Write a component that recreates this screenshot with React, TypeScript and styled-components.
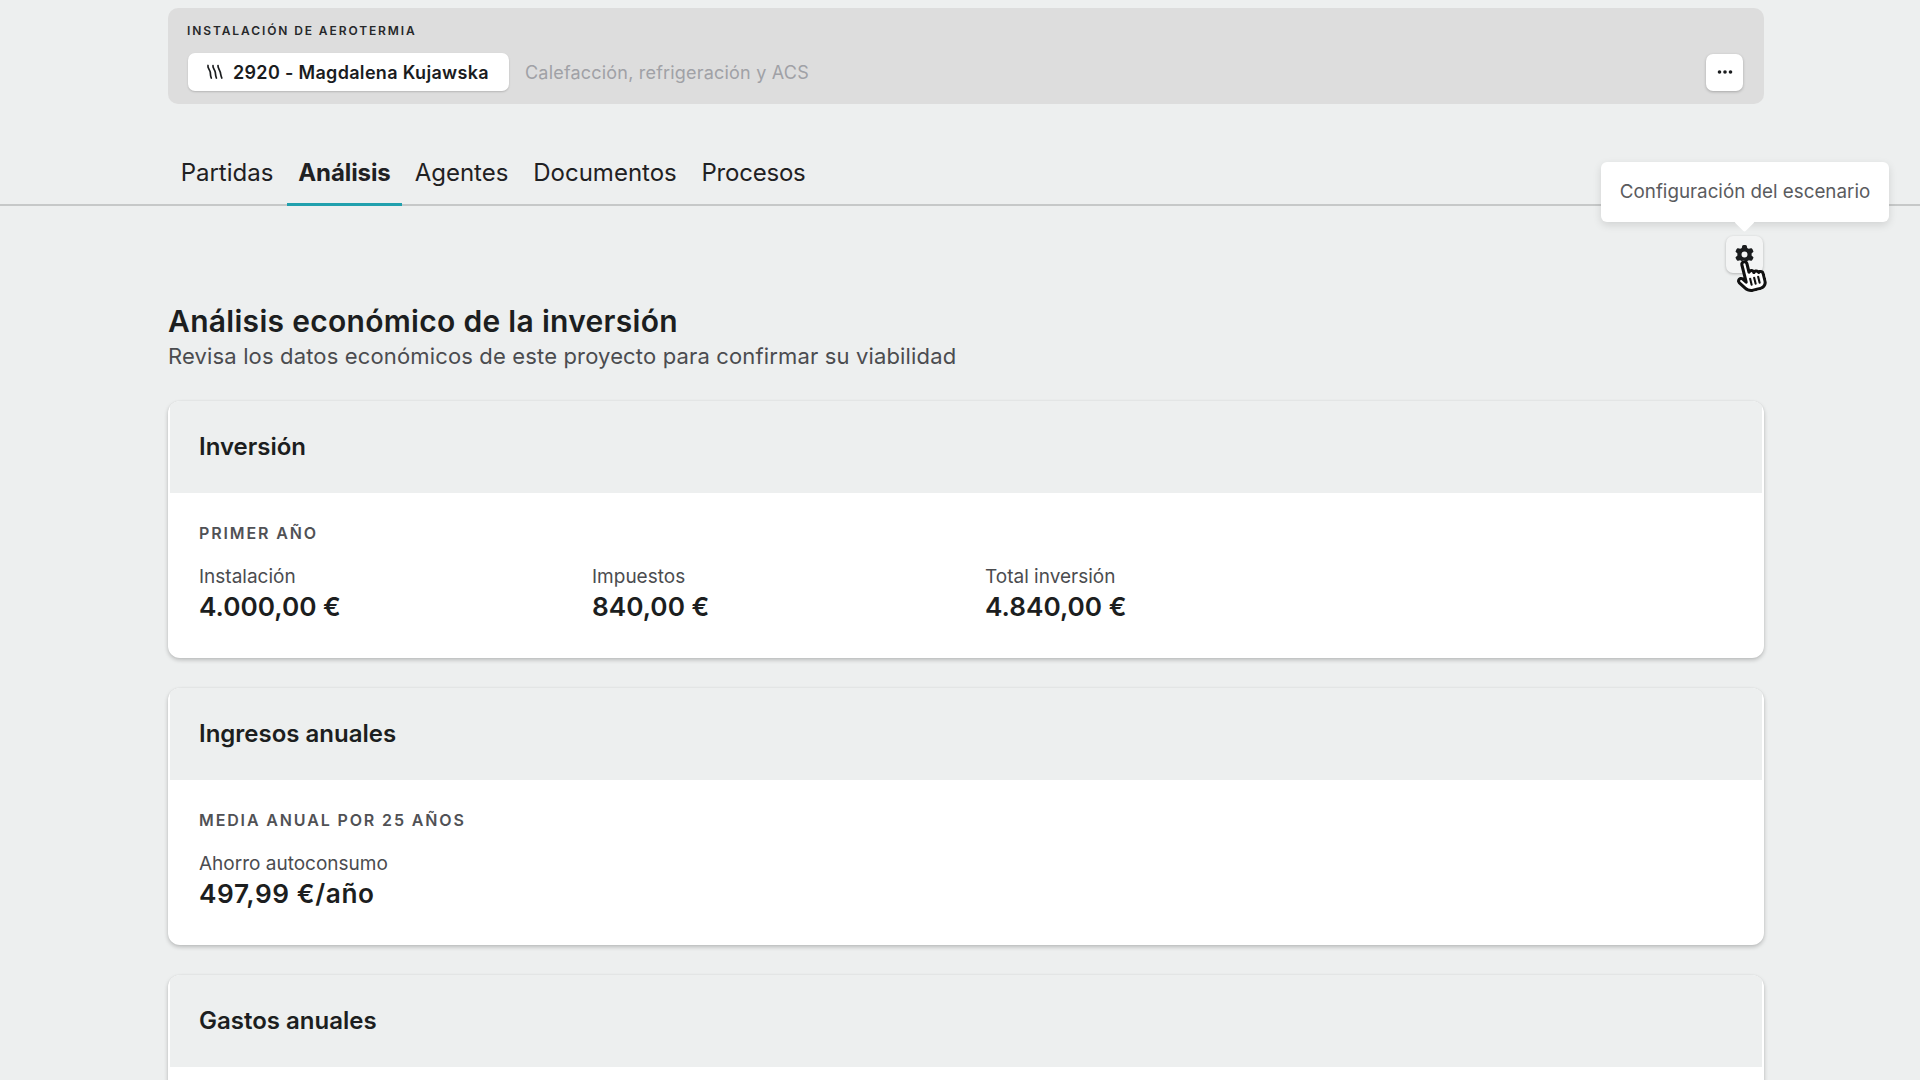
import React from "react";
import styled, { createGlobalStyle } from "styled-components";
import { FaGear, FaHandPointer, FaRegHandPointer } from "react-icons/fa6";

const Global = createGlobalStyle`
  html, body { margin: 0; padding: 0; height: 1080px; overflow: hidden; background: #edefef; }
  body { font-family: Inter, "Noto Sans", "Liberation Sans", sans-serif; color: #1c1e20; }
  #root { height: 1080px; overflow: hidden; }
`;

const Page = styled.div`
  display: flex;
  flex-direction: column;
  padding-top: 8px;
`;

const Shell = styled.div`
  padding: 0 156px 0 168px;
`;

const ProjectPanel = styled.section`
  height: 96px;
  box-sizing: border-box;
  background: #dddddd;
  border-radius: 10px;
  padding: 15px 21px 13px 19px;
  display: flex;
  flex-direction: column;
  justify-content: space-between;
`;

const PanelLabel = styled.div`
  font-size: 12px;
  line-height: 15px;
  font-weight: 600;
  letter-spacing: 1.9px;
  color: #26282a;
`;

const PanelRow = styled.div`
  display: flex;
  align-items: center;
  height: 38px;
`;

const ProjectChip = styled.div`
  height: 38px;
  width: 321px;
  box-sizing: border-box;
  margin-left: 1px;
  padding-left: 18px;
  display: flex;
  align-items: center;
  gap: 7px;
  background: #fff;
  border-radius: 7px;
  box-shadow: 0 1px 2px rgba(0, 0, 0, 0.18);
  font-size: 18px;
  font-weight: 600;
  letter-spacing: 0.32px;
  color: #1a1c1e;
  white-space: nowrap;
`;

const PanelHint = styled.span`
  margin-left: 16px;
  font-size: 18px;
  letter-spacing: 0.2px;
  color: #a0a1a6;
  white-space: nowrap;
`;

const IconButton = styled.button<{ $pressed?: boolean }>`
  width: 37px;
  height: 37px;
  padding: 0;
  border: 0;
  border-radius: 7px;
  display: flex;
  align-items: center;
  justify-content: center;
  background: ${(p) => (p.$pressed ? "#f3f4f4" : "#fff")};
  box-shadow: 0 1px 3px rgba(0, 0, 0, 0.25);
  color: #1a1c1e;
  position: relative;
`;

const MoreButton = styled(IconButton)`
  margin-left: auto;
`;

const TabBar = styled.nav`
  margin-top: 36px;
  height: 66px;
  box-sizing: border-box;
  padding-left: 169px;
  display: flex;
  gap: 2px;
  border-bottom: 2px solid #c6c8c8;
`;

const Tab = styled.div<{ $active?: boolean; $w: number; $ls: number }>`
  width: ${(p) => p.$w}px;
  height: 66px;
  box-sizing: border-box;
  display: flex;
  align-items: center;
  justify-content: center;
  padding-top: 2px;
  font-size: 24px;
  letter-spacing: ${(p) => p.$ls}px;
  font-weight: ${(p) => (p.$active ? 700 : 400)};
  color: #1f2123;
  border-bottom: 3px solid ${(p) => (p.$active ? "#21a0ad" : "transparent")};
`;

const ActionRow = styled.div`
  display: flex;
  justify-content: flex-end;
  height: 0;
  padding-right: 157px;
`;

const ActionAnchor = styled.div`
  position: relative;
  margin-top: 30px;
  height: 37px;
`;

const Tooltip = styled.div`
  position: absolute;
  right: -126px;
  bottom: 51px;
  width: 288px;
  height: 60px;
  box-sizing: border-box;
  display: flex;
  align-items: center;
  justify-content: center;
  padding-bottom: 2px;
  background: #fff;
  border-radius: 6px;
  box-shadow: 0 3px 8px rgba(0, 0, 0, 0.12);
  font-size: 18.8px;
  color: #5a5b5e;
  white-space: nowrap;
  z-index: 3;
  &::after {
    content: "";
    position: absolute;
    left: 136px;
    bottom: -7px;
    width: 15px;
    height: 15px;
    background: #fff;
    border-radius: 2px;
    transform: rotate(45deg);
  }
`;

const Cursor = styled.span`
  position: absolute;
  left: 10px;
  top: 23px;
  width: 29px;
  height: 34px;
  transform: rotate(-14deg);
  z-index: 4;
  svg {
    position: absolute;
    left: 0;
    top: 0;
    width: 29px;
    height: 33px;
  }
`;

const GearIcon = styled(FaGear)`
  width: 19px;
  height: 19px;
  margin-bottom: 1px;
`;

const Content = styled(Shell)`
  padding-top: 97px;
  display: flex;
  flex-direction: column;
`;

const Title = styled.h1`
  margin: 0;
  font-size: 30px;
  line-height: 37px;
  font-weight: 600;
  letter-spacing: 0.3px;
  color: #1c1e20;
`;

const Subtitle = styled.p`
  margin: 0 0 29px;
  font-size: 22px;
  line-height: 32px;
  letter-spacing: 0.15px;
  color: #4b4c4f;
  white-space: nowrap;
`;

const Cards = styled.div`
  display: flex;
  flex-direction: column;
  gap: 30px;
`;

const Card = styled.article`
  border-radius: 12px;
  overflow: hidden;
  background: #fff;
  box-shadow: 0 2px 4px rgba(0, 0, 0, 0.22), 0 0 2px rgba(0, 0, 0, 0.06);
`;

const CardHeader = styled.header`
  height: 92px;
  box-sizing: border-box;
  padding: 0 31px;
  display: flex;
  align-items: center;
  background: #edefef;
  margin: 0 2px;
`;

const CardTitle = styled.h2`
  margin: 0 0 1px -2px;
  font-size: 24px;
  font-weight: 600;
  color: #1c1e20;
`;

const CardBody = styled.div`
  height: 165px;
  box-sizing: border-box;
  padding: 30px 31px 0;
`;

const SectionLabel = styled.div`
  font-size: 16px;
  line-height: 20px;
  font-weight: 600;
  letter-spacing: 1.87px;
  color: #505155;
`;

const Metrics = styled.div`
  margin-top: 22px;
  display: grid;
  grid-template-columns: repeat(4, 393px);
`;

const Metric = styled.div`
  display: flex;
  flex-direction: column;
`;

const MetricLabel = styled.span`
  font-size: 19px;
  line-height: 24px;
  color: #4b4c4f;
`;

const MetricValue = styled.span<{ $ls?: number }>`
  margin-top: 1px;
  font-size: 26.2px;
  line-height: 34px;
  font-weight: 600;
  letter-spacing: ${(p) => p.$ls ?? 0}px;
  color: #1c1e20;
`;

const HeatIcon = () => (
  <svg width="20" height="18" viewBox="0 0 20 18" fill="none" stroke="#1a1c1e" strokeWidth="1.7" strokeLinecap="round">
    <path d="M2 2.500c-.8 2 2 4.500 2.300 6.800.2 1.700-.2 2.700 1 5.700" />
    <path d="M7 2.500c-.6 2 1.900 4.500 2.300 6.800.3 1.700 0 2.700 1.100 5.700" />
    <path d="M12 2.500c-.4 2 1.700 4.500 2.300 6.800.4 1.700.3 2.700 1.500 5.700" />
  </svg>
);

const DotsIcon = () => (
  <svg width="16" height="6" viewBox="0 0 16 6" fill="#1a1c1e">
    <circle cx="2.500" cy="3" r="1.800" />
    <circle cx="8" cy="3" r="1.800" />
    <circle cx="13.500" cy="3" r="1.800" />
  </svg>
);

const tabs = [
  { label: "Partidas", w: 116, ls: 0 },
  { label: "Análisis", w: 115, ls: -0.1, active: true },
  { label: "Agentes", w: 115, ls: 0 },
  { label: "Documentos", w: 168, ls: 0 },
  { label: "Procesos", w: 125, ls: -0.2 },
];

type MetricData = { label: string; value: string; ls?: number };
type CardData = { title: string; section?: string; metrics?: MetricData[] };

const cards: CardData[] = [
  {
    title: "Inversión",
    section: "PRIMER AÑO",
    metrics: [
      { label: "Instalación", value: "4.000,00 €" },
      { label: "Impuestos", value: "840,00 €" },
      { label: "Total inversión", value: "4.840,00 €" },
    ],
  },
  {
    title: "Ingresos anuales",
    section: "MEDIA ANUAL POR 25 AÑOS",
    metrics: [{ label: "Ahorro autoconsumo", value: "497,99 €/año", ls: 0.6 }],
  },
  { title: "Gastos anuales" },
];

export default function App() {
  return (
    <Page>
      <Global />
      <Shell>
        <ProjectPanel>
          <PanelLabel>INSTALACIÓN DE AEROTERMIA</PanelLabel>
          <PanelRow>
            <ProjectChip>
              <HeatIcon />
              2920 - Magdalena Kujawska
            </ProjectChip>
            <PanelHint>Calefacción, refrigeración y ACS</PanelHint>
            <MoreButton aria-label="Más opciones">
              <DotsIcon />
            </MoreButton>
          </PanelRow>
        </ProjectPanel>
      </Shell>
      <TabBar>
        {tabs.map((t) => (
          <Tab key={t.label} $active={t.active} $w={t.w} $ls={t.ls}>
            {t.label}
          </Tab>
        ))}
      </TabBar>
      <ActionRow>
        <ActionAnchor>
          <Tooltip>Configuración del escenario</Tooltip>
          <IconButton $pressed aria-label="Configuración del escenario">
            <GearIcon />
            <Cursor>
              <FaHandPointer color="#fff" />
              <FaRegHandPointer color="#111" />
            </Cursor>
          </IconButton>
        </ActionAnchor>
      </ActionRow>
      <Content>
        <Title>Análisis económico de la inversión</Title>
        <Subtitle>Revisa los datos económicos de este proyecto para confirmar su viabilidad</Subtitle>
        <Cards>
          {cards.map((c) => (
            <Card key={c.title}>
              <CardHeader>
                <CardTitle>{c.title}</CardTitle>
              </CardHeader>
              <CardBody>
                {c.section && <SectionLabel>{c.section}</SectionLabel>}
                {c.metrics && (
                  <Metrics>
                    {c.metrics.map((m) => (
                      <Metric key={m.label}>
                        <MetricLabel>{m.label}</MetricLabel>
                        <MetricValue $ls={m.ls}>{m.value}</MetricValue>
                      </Metric>
                    ))}
                  </Metrics>
                )}
              </CardBody>
            </Card>
          ))}
        </Cards>
      </Content>
    </Page>
  );
}
